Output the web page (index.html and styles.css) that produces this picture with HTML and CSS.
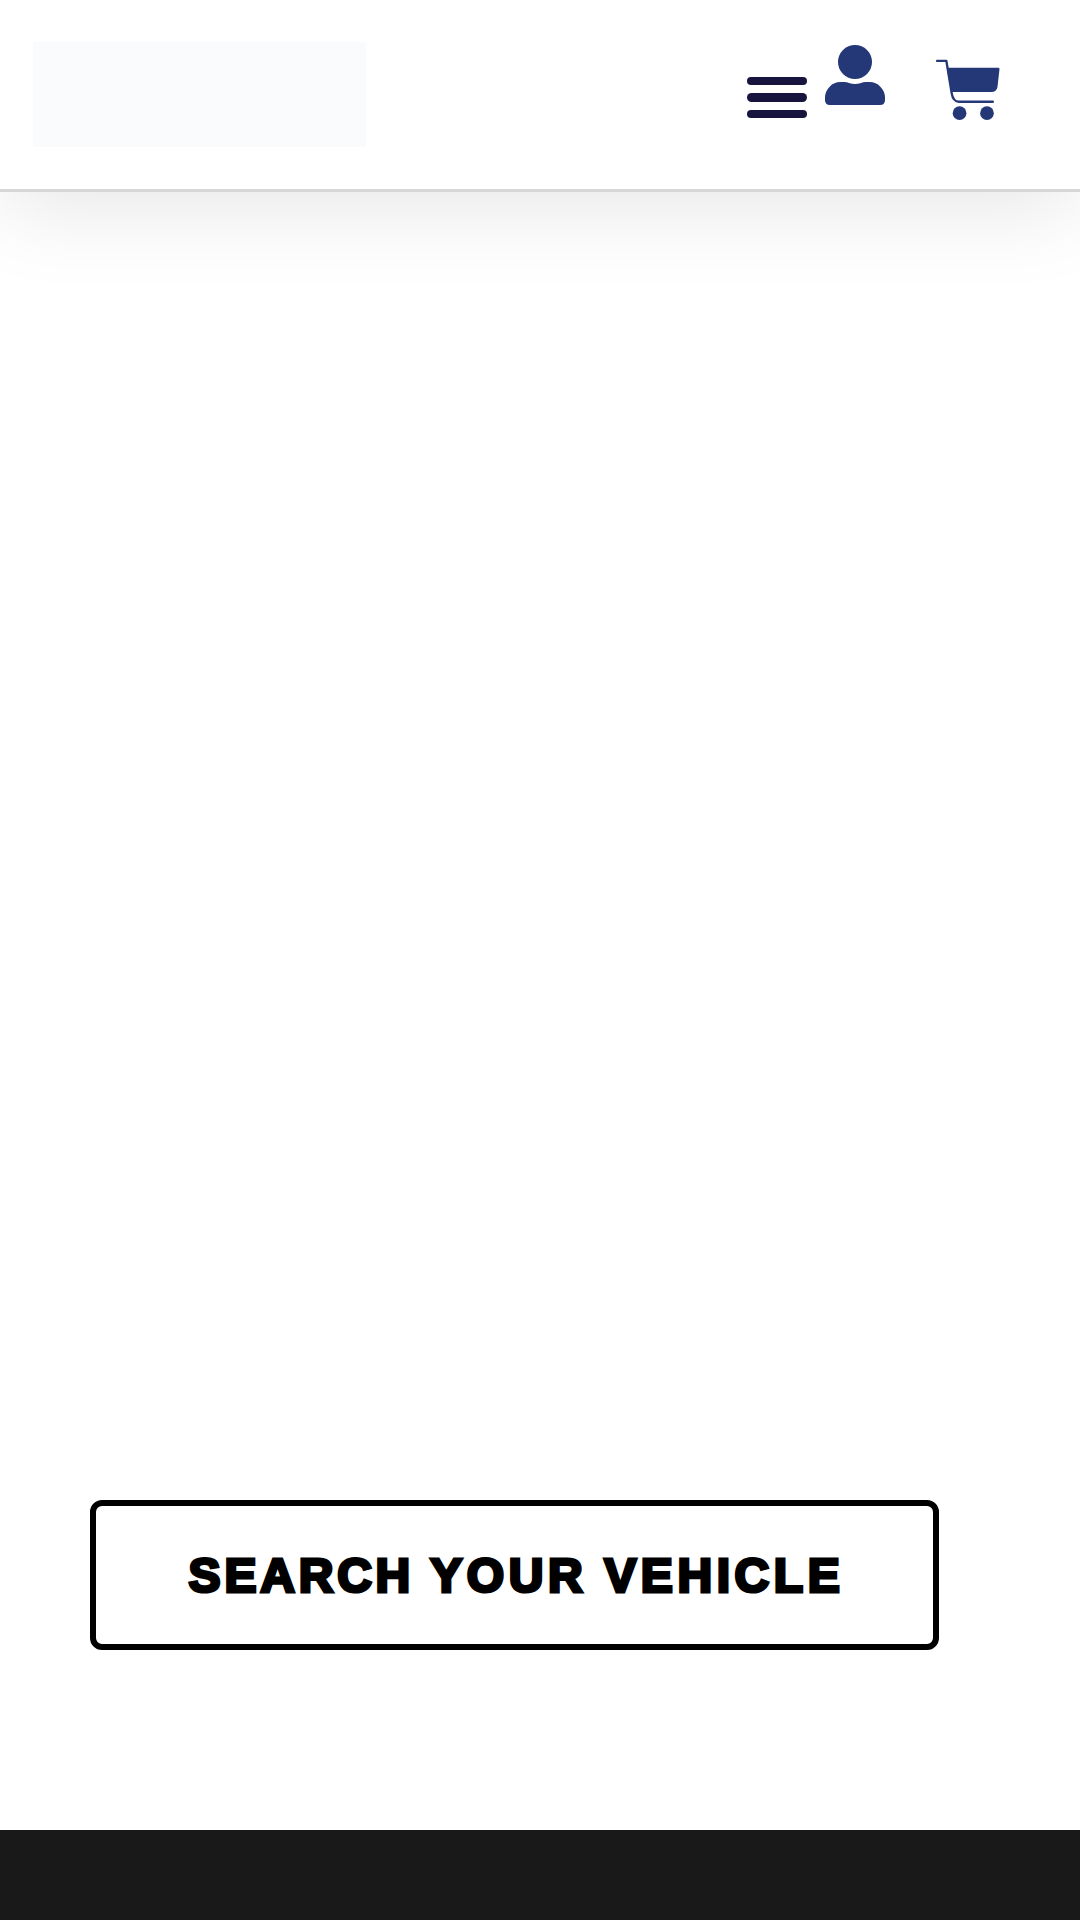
FILE: index.html
```
<!DOCTYPE html>
<html lang="en">
<head>
    <meta charset="UTF-8">
    <meta name="viewport" content="width=device-width, initial-scale=1.0">
    <title>Search Your Vehicle</title>
    <link rel="stylesheet" href="styles.css">
</head>
<body>
    <header class="header">
        <a class="logo" href="#" aria-label="Home"></a>
        <nav class="header-icons">
            <a class="menu-toggle" href="#" aria-label="Menu">
                <span></span>
                <span></span>
                <span></span>
            </a>
            <a class="account" href="#" aria-label="Account">
                <svg viewBox="0 0 180 180">
                    <circle cx="90" cy="51" r="51"/>
                    <path d="M46 111H58Q66 111 72 114Q90 120 108 114Q114 111 122 111H134Q153 111 166 125Q180 139 180 158V165Q180 180 165 180H15Q0 180 0 165V158Q0 139 14 125Q27 111 46 111Z"/>
                </svg>
            </a>
            <a class="cart" href="#" aria-label="Cart">
                <svg viewBox="0 0 190 184">
                    <path class="cart-frame" d="M3 5.500H31L47 103Q51 128 69 128H170"/>
                    <path d="M32 26H186Q190 26 190 30L184 84Q181 99 166 99H46Z"/>
                    <circle cx="70.500" cy="162" r="20.500"/>
                    <circle cx="152.500" cy="162" r="20.500"/>
                </svg>
            </a>
        </nav>
    </header>

    <main class="hero">
        <a class="search-btn" href="#"><span><span class="word-tight">SEARCH</span> YOUR VEHICLE</span></a>
    </main>

    <footer class="footer"></footer>
</body>
</html>
```
FILE: styles.css
```
* {
    box-sizing: border-box;
}
body {
    font-family: "Liberation Sans", Arial, sans-serif;
    background-color: #fff;
    margin: 0;
    min-height: 1920px;
    display: flex;
    flex-direction: column;
}
.header {
    display: flex;
    justify-content: space-between;
    align-items: flex-start;
    height: 192px;
    padding: 42px 80px 0 33px;
    background-color: #fff;
    border-bottom: 3px solid #d6d6d6;
    box-shadow: 0 15px 90px rgba(0, 0, 0, 0.1);
}
.logo {
    width: 333px;
    height: 105px;
    background-color: #fafbfd;
}
.header-icons {
    display: flex;
    align-items: flex-start;
}
.header-icons svg {
    display: block;
    width: 100%;
    fill: #243777;
}
.menu-toggle {
    display: flex;
    flex-direction: column;
    gap: 8px;
    width: 60px;
    margin-top: 35px;
}
.menu-toggle span {
    height: 8.400px;
    border-radius: 5px;
    background-color: #17153d;
}
.account {
    width: 60px;
    margin: 3px 51px 0 18px;
}
.cart {
    width: 63.500px;
    margin: 17px 0.500px 0 0;
}
.cart-frame {
    fill: none;
    stroke: #243777;
    stroke-width: 7;
    stroke-linecap: round;
    stroke-linejoin: round;
}
.hero {
    flex: 1;
    display: flex;
    align-items: flex-end;
    padding: 0 90px 180px;
}
.search-btn {
    display: flex;
    align-items: center;
    justify-content: center;
    width: 849px;
    height: 150px;
    padding: 1px 0 0 4px;
    border: 6px solid #000;
    border-radius: 12px;
    color: #000;
    font-size: 48px;
    font-weight: 900;
    letter-spacing: 4.600px;
    word-spacing: -1px;
    white-space: nowrap;
    text-decoration: none;
    -webkit-text-stroke: 3.200px #000;
}
.word-tight {
    letter-spacing: 3.800px;
}
.footer {
    height: 90px;
    background-color: #191919;
}
```
